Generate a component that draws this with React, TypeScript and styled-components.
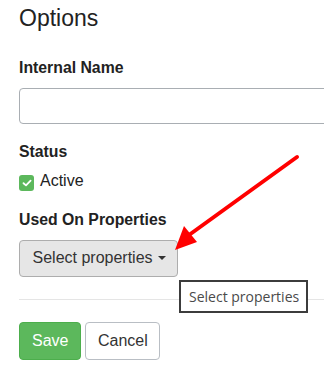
import React from "react";
import styled, { createGlobalStyle } from "styled-components";

const Global = createGlobalStyle`
  html, body {
    margin: 0;
    padding: 0;
    background: #ffffff;
    overflow: hidden;
  }
  body {
    font-family: "Liberation Sans", Arial, sans-serif;
    color: #333333;
  }
  * { box-sizing: border-box; }
`;

const Page = styled.div`
  position: relative;
  width: 324px;
  height: 372px;
  overflow: hidden;
`;

const Form = styled.div`
  width: 400px;
  padding-left: 19px;
  display: flex;
  flex-direction: column;
`;

const Heading = styled.h3`
  margin: 6.4px 0 0;
  font-size: 23px;
  line-height: 1.1;
  font-weight: 400;
  color: #222;
`;

const Group = styled.div<{ $top: number }>`
  margin-top: ${(p) => p.$top}px;
  display: flex;
  flex-direction: column;
`;

const Label = styled.label`
  font-size: 15.8px;
  line-height: 21.7px;
  font-weight: 700;
  color: #222;
  margin-bottom: 9.5px;
`;

const TextInput = styled.input`
  height: 36px;
  width: 100%;
  border: 1px solid #a9aeb3;
  border-radius: 4px;
  padding: 6px 12px;
  font-size: 16px;
  font-family: inherit;
  background: #fff;
`;

const CheckRow = styled.label`
  display: flex;
  align-items: flex-start;
  gap: 6px;
  margin-top: -1.5px;
  font-size: 16px;
  line-height: 22px;
  color: #222;
`;

const Check = styled.span`
  width: 15px;
  height: 16px;
  margin-top: 4.5px;
  border-radius: 3px;
  background: #5cb85c;
  display: flex;
  align-items: center;
  justify-content: center;
`;

const SelectButton = styled.button`
  align-self: flex-start;
  height: 37px;
  width: 159px;
  display: flex;
  align-items: center;
  padding: 0 10px 0 12.5px;
  background: #e6e6e6;
  border: 1px solid #adadad;
  border-radius: 4px;
  font-family: inherit;
  font-size: 16px;
  color: #333;
`;

const Caret = styled.span`
  margin-left: auto;
  width: 0;
  height: 0;
  border-top: 4px solid #333;
  border-left: 4px solid transparent;
  border-right: 4px solid transparent;
  margin-right: 1px;
`;

const Divider = styled.hr`
  margin: 22.5px 0 0;
  border: 0;
  border-top: 1px solid #e5e5e5;
  width: 100%;
`;

const Actions = styled.div`
  margin-top: 22px;
  display: flex;
  gap: 4px;
`;

const Btn = styled.button<{ $primary?: boolean }>`
  height: 38px;
  padding: 0 12px;
  border-radius: 4px;
  font-family: inherit;
  font-size: 16px;
  border: 1px solid ${(p) => (p.$primary ? "#4cae4c" : "#b9bec4")};
  background: ${(p) => (p.$primary ? "#5cb85c" : "#ffffff")};
  color: ${(p) => (p.$primary ? "#ffffff" : "#333333")};
  width: ${(p) => (p.$primary ? "62px" : "75px")};
`;

const Tooltip = styled.div`
  position: absolute;
  left: 179px;
  top: 280px;
  width: 129px;
  height: 33px;
  border: 2px solid #3c3c3c;
  background: #ffffff;
  font-family: "Open Sans", "DejaVu Sans", sans-serif;
  font-size: 14px;
  color: #4a4a4a;
  display: flex;
  align-items: center;
  padding-left: 8px;
  white-space: nowrap;
`;

const Overlay = styled.svg`
  position: absolute;
  left: 0;
  top: 0;
  pointer-events: none;
`;

export default function App() {
  return (
    <Page>
      <Global />
      <Form>
        <Heading>Options</Heading>
        <Group $top={25}>
          <Label>Internal Name</Label>
          <TextInput type="text" />
        </Group>
        <Group $top={16.8}>
          <Label>Status</Label>
          <CheckRow>
            <Check>
              <svg width="10" height="8" viewBox="0 0 10 8">
                <path d="M1.5 4.2 L4 6.4 L8.6 1.6" fill="none" stroke="#fff" strokeWidth="1.8" strokeLinecap="round" strokeLinejoin="round" />
              </svg>
            </Check>
            Active
          </CheckRow>
        </Group>
        <Group $top={16.3}>
          <Label>Used On Properties</Label>
          <SelectButton>
            Select properties
            <Caret />
          </SelectButton>
        </Group>
        <Divider />
        <Actions>
          <Btn $primary>Save</Btn>
          <Btn>Cancel</Btn>
        </Actions>
      </Form>
      <Tooltip>Select properties</Tooltip>
      <Overlay width="324" height="372" viewBox="0 0 324 372">
        <line x1="297" y1="157" x2="189" y2="235" stroke="#ff0000" strokeWidth="4" strokeLinecap="round" />
        <polygon points="175,250 184,226 197,242" fill="#ff0000" />
      </Overlay>
    </Page>
  );
}
